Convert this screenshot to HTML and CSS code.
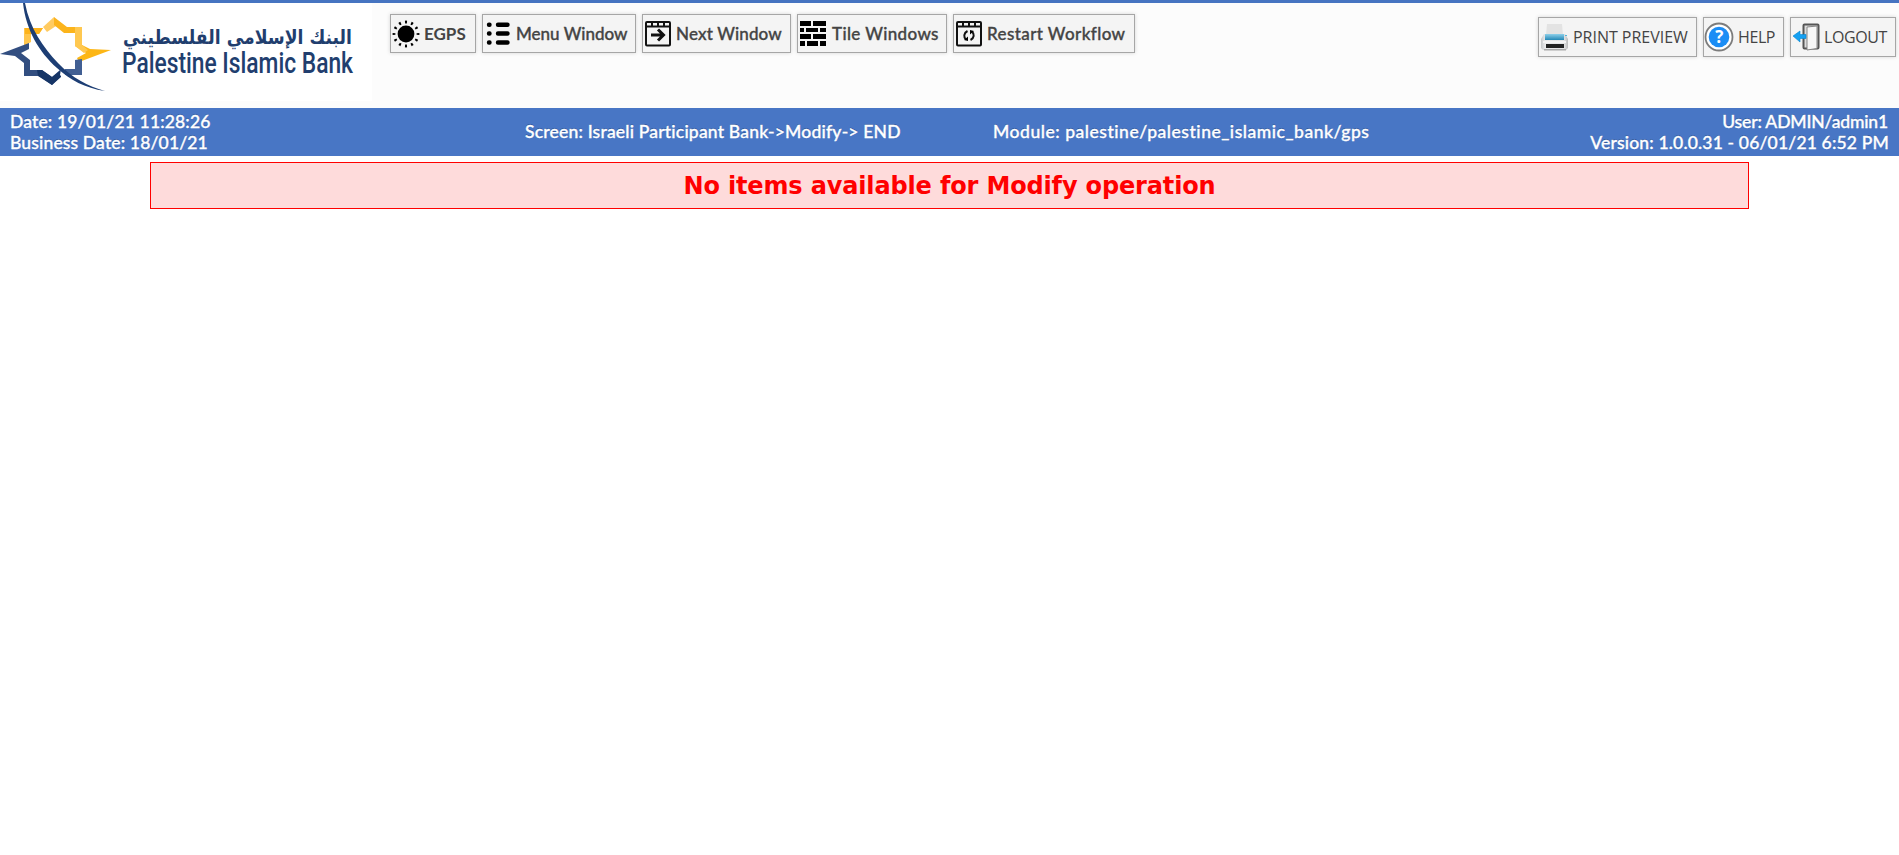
FILE: index.html
```html
<!DOCTYPE html>
<html lang="en">
<head>
<meta charset="utf-8">
<title>Palestine Islamic Bank</title>
<link rel="stylesheet" href="styles.css">
</head>
<body>
<header class="header">
  <svg class="logo" viewBox="0 3 372 98" width="372" height="98">
    <defs>
      <linearGradient id="gold" x1="0" x2="0" y1="0" y2="1"><stop offset="0" stop-color="#fbb31f"/><stop offset="1" stop-color="#fdb713"/></linearGradient>
    </defs>
    <path fill="#ffc64d" d="M24 46V28H43L39 34H31V42Z"/>
    <path fill="#fdb31b" d="M25 28H43L39 34H25Z"/>
    <path fill="#ffcb61" d="M43 27L54 17L56 26L47 32Z"/>
    <path fill="url(#gold)" d="M54 17L67 27H82V45L90 49L111 50L79 62L77 58L86 53L75 46V33H64L54 25Z"/>
    <path fill="#ffc850" d="M75 27H82V45L88 50L84 53L75 46Z"/>
    <path fill="#324e80" d="M0 54L29 43V49L21 53L30 60V70H42L52 77L60 70V77L52 85L39 76H24V63L15 56Z"/>
    <path fill="#163566" d="M37 70H42L52 77L61 70V77L52 85L38 76Z"/>
    <path fill="#415f93" d="M75 60L82 59V75H65V69H75Z"/>
    <path fill="#fff" d="M61 69L64 68V79L60 75Z"/>
    <path fill="#1d3e74" d="M23 3H25C30 29 43 47 58 63C72 78 88 86 105 91C85 88 70 80 57 68C39 52 26 30 23 3Z"/>
    <text class="logo-ar" x="352" y="44" textLength="229" lengthAdjust="spacingAndGlyphs" direction="rtl">البنك الإسلامي الفلسطيني</text>
    <text class="logo-en" x="122" y="73" textLength="231" lengthAdjust="spacingAndGlyphs">Palestine Islamic Bank</text>
  </svg>
  <nav class="windows">
    <button class="btn egps"><svg width="28" height="28" viewBox="0 0 28 28"><circle cx="14" cy="14" r="8.400"/><circle class="rays" cx="14" cy="14" r="12" pathLength="120"/></svg><span>EGPS</span></button>
    <button class="btn menu"><svg width="28" height="28" viewBox="0 0 28 28"><path class="bars" d="M5 4.700h.5M5 13.500h.5M5 22.500h.5M14 4.700h9.500M14 13.500h9.500M14 22.500h9.500"/></svg><span>Menu Window</span></button>
    <button class="btn next"><svg width="28" height="28" viewBox="0 0 28 28"><g class="frame"><rect x="2" y="2" width="24" height="23.500" rx="1"/><path d="M2 6.500h24M8 2v4M14 2v4M20 2v4"/></g><path class="arrow" d="M7 15h12M14 9.500l5.500 5.500l-5.500 5.500"/></svg><span>Next Window</span></button>
    <button class="btn tile"><svg width="28" height="28" viewBox="0 0 28 28"><path d="M1 1h11v5H1zM14 1h13v5H14zM1 8h4v4H1zM7 8h12v4H7zM21 8h6v4h-6zM1 14h11v5H1zM14 14h13v5H14zM1 21h5v5H1zM8 21h11v5H8zM21 21h6v5h-6z"/></svg><span>Tile Windows</span></button>
    <button class="btn restart"><svg width="28" height="28" viewBox="0 0 28 28"><g class="frame"><rect x="2" y="2" width="24" height="23.500" rx="1"/><path d="M2 6.500h24M8 2v4M14 2v4M20 2v4"/></g><path class="cycle" d="M12.500 11c-4 2-4 6-1.500 8.500M15.500 20c4-2 4-6 1.500-8.500"/><path d="M9 20l4 1v-4.500zM19 11l-4-1v4.500z"/></svg><span>Restart Workflow</span></button>
  </nav>
  <nav class="tools">
    <button class="btn print"><svg width="30" height="30" viewBox="0 0 30 30">
      <defs><linearGradient id="body" x1="0" x2="1"><stop offset="0" stop-color="#c5c7c9"/><stop offset=".15" stop-color="#e9eaeb"/><stop offset=".85" stop-color="#e4e5e6"/><stop offset="1" stop-color="#bbb"/></linearGradient>
      <linearGradient id="blue" x1="0" x2="0" y1="0" y2="1"><stop offset="0" stop-color="#8ed0ea"/><stop offset="1" stop-color="#2387b5"/></linearGradient></defs>
      <path fill="#e3e3e3" d="M8 2h15l1 11H7z"/><path fill="url(#body)" d="M5 12h21l3 5v9l-2 2H4l-2-2v-9z"/><path fill="url(#blue)" d="M6 12h19v6H6z"/><path fill="#f3f3f3" d="M4 19h23v2H4z"/><path fill="#222" d="M7 22h18v4H7z"/><path fill="#aaa" d="M5 27h22v1.500H5z"/><path fill="#53b6da" d="M26 13h2v1h-2z"/></svg><span>PRINT PREVIEW</span></button>
    <button class="btn help"><svg width="30" height="30" viewBox="0 0 30 30"><circle cx="15" cy="15" r="13.500" fill="#fff" stroke="#7c7c7c" stroke-width="1.800"/><circle cx="15" cy="15" r="10.300" fill="#1b8df5"/><text x="15" y="21" text-anchor="middle" class="question">?</text></svg><span>HELP</span></button>
    <button class="btn logout"><svg width="30" height="30" viewBox="0 0 30 30"><rect x="12.500" y="2.500" width="15" height="24" rx="1" fill="#ddd" stroke="#555" stroke-width="2"/><path fill="#f7f7f7" stroke="#858585" d="M16 5l10-1v22.500L16 28z"/><path fill="#15a0f2" stroke="#0784cf" stroke-width=".6" d="M2 14l7-5v3.500h6v4H9V20z"/></svg><span>LOGOUT</span></button>
  </nav>
</header>
<section class="info">
  <div class="dates"><div class="date">Date: 19/01/21 11:28:26</div><div class="business">Business Date: 18/01/21</div></div>
  <div class="screen">Screen: Israeli Participant Bank-&gt;Modify-&gt; END</div>
  <div class="module">Module: palestine/palestine_islamic_bank/gps</div>
  <div class="session"><div class="user">User: ADMIN/admin1</div><div class="version">Version: 1.0.0.31 - 06/01/21 6:52 PM</div></div>
</section>
<main class="alert">No items available for Modify operation</main>
</body>
</html>
```
FILE: styles.css
```css
* { box-sizing: border-box; }
body { margin: 0; background: #fff; font-family: "Open Sans", "Noto Sans", sans-serif; }
.header { display: flex; height: 108px; border-top: 3px solid #4674c1; background: #fcfcfc; }
.logo { display: block; background: #fff; flex: none; overflow: visible; }
.logo-ar { font: bold 20px "DejaVu Sans", sans-serif; fill: #213e6e; }
.logo-en { font: 500 29.500px Roboto, sans-serif; fill: #213e6e; }
.windows { display: flex; gap: 6px; padding: 11px 0 0 18px; }
.tools { display: flex; gap: 6px; padding: 14px 3px 0 0; margin-left: auto; }
.btn { display: flex; align-items: center; height: 39px; padding: 0; border: 1px solid #a6a6a6; background: #f4f4f4; color: #444; white-space: nowrap; box-shadow: 0 0 4px rgba(0,0,0,.16); font: 500 17px Lato, sans-serif; }
.btn svg { flex: none; margin-left: 1px; }
.windows svg { fill: #000; }
.windows span { margin-left: 4px; -webkit-text-stroke: .35px #444; }
.rays { fill: none; stroke: #000; stroke-width: 2.800; stroke-dasharray: 3.300 6.700; stroke-dashoffset: 1.650; }
.bars { fill: none; stroke: #000; stroke-width: 4.400; stroke-linecap: round; }
.frame { fill: none; stroke: #111; stroke-width: 2; }
.arrow { fill: none; stroke: #111; stroke-width: 3; }
.cycle { fill: none; stroke: #111; stroke-width: 2; }
.egps { width: 86px; font-weight: 700; }
.egps span { -webkit-text-stroke: 0; }
.menu { width: 154px; }
.next { width: 149px; letter-spacing: .15px; }
.tile { width: 150px; letter-spacing: .37px; }
.tile span { margin-left: 5px; }
.restart { width: 182px; letter-spacing: .4px; }
.tools .btn { height: 40px; font: 400 16px "Open Sans", sans-serif; letter-spacing: -.4px; }
.tools .btn svg { margin-left: 0; }
.tools .print { width: 159px; letter-spacing: -.02px; }
.print span { margin-left: 4px; }
.help { width: 81px; }
.help span { margin-left: 4px; }
.question { font: bold 17px "Open Sans", sans-serif; fill: #fff; }
.logout { width: 106px; }
.logout span { margin-left: 3px; }
.info { display: grid; grid-template-columns: 525px 468px 1fr auto; align-items: center; height: 48px; background: #4876c5; color: #fff; font: 500 17.500px/21px Lato, sans-serif; text-shadow: 0 -1px 0 #315a9f; white-space: nowrap; -webkit-text-stroke: .35px #fff; }
.dates { padding-left: 10px; letter-spacing: .15px; }
.screen { padding-bottom: 1px; letter-spacing: .2px; }
.module { padding-bottom: 1px; letter-spacing: .53px; }
.session { padding-right: 10px; text-align: right; }
.user { padding-right: 1px; letter-spacing: -.15px; }
.version { letter-spacing: .17px; }
.alert { display: flex; align-items: center; justify-content: center; width: 1599px; height: 47px; padding-top: 1px; margin: 6px 0 0 150px; border: 1px solid #f00; background: #fedbdb; color: #f00; font: bold 24px "DejaVu Sans", sans-serif; letter-spacing: -.15px; white-space: nowrap; }
```
